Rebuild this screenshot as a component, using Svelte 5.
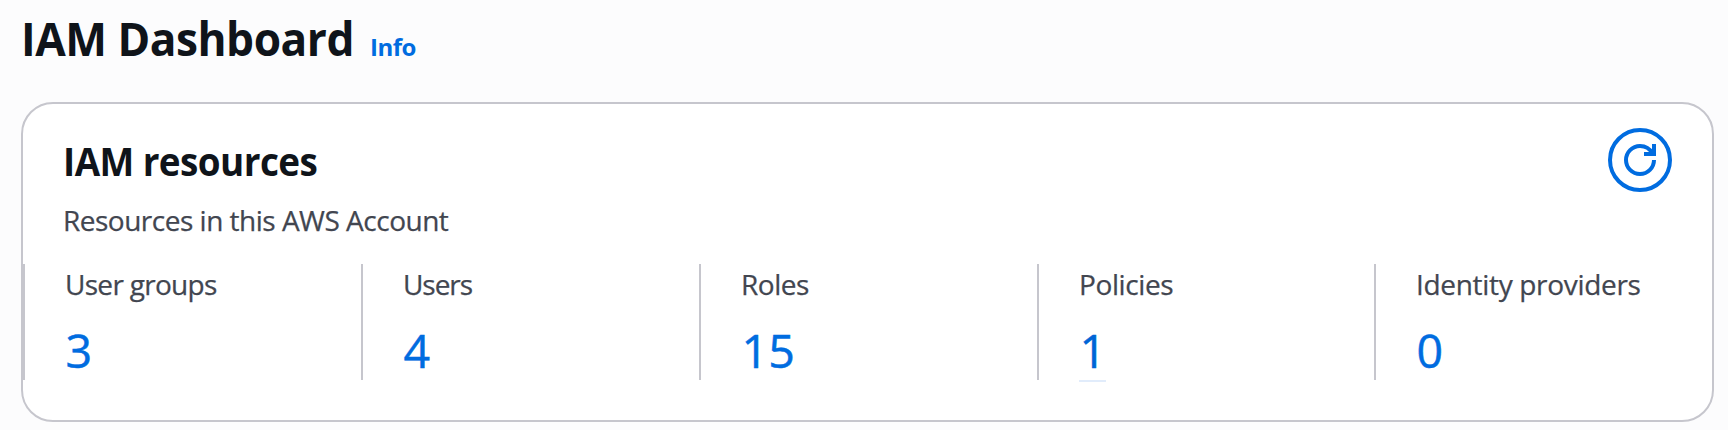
<script>
  const resources = [
    { label: 'User groups', value: 3, tracking: -0.7 },
    { label: 'Users', value: 4, tracking: -1.05 },
    { label: 'Roles', value: 15, tracking: -0.45 },
    { label: 'Policies', value: 1, tracking: -0.38, active: true },
    { label: 'Identity providers', value: 0, tracking: -0.32 }
  ];
</script>

<main>
  <header><h1>IAM Dashboard</h1><a class="info" href="#info">Info</a></header>
  <section>
    <div class="head">
      <div>
        <h2>IAM resources</h2>
        <p>Resources in this AWS Account</p>
      </div>
      <button aria-label="Refresh">
        <svg viewBox="0 0 32 32" width="32" height="32" fill="none" stroke="currentColor" stroke-width="4">
          <path d="M30 16A14 14 0 1 1 16 2C21.5 2 26 5 28.4 9.5" />
          <path d="M30 0v10H20" />
        </svg>
      </button>
    </div>
    <div class="grid">
      {#each resources as r}
        <div class="col">
          <div class="label" style="letter-spacing: {r.tracking}px">{r.label}</div>
          <a class="value" class:active={r.active} href="#list">{r.value}</a>
        </div>
      {/each}
    </div>
  </section>
</main>

<style>
  :global(body) { background: #fcfcfd; }
  main { box-sizing: border-box; height: 430px; padding: 0 14px 0 21px; font-family: "Open Sans", "Noto Sans", sans-serif; color: #0f141a; overflow: hidden; }
  header { height: 102px; box-sizing: border-box; padding-top: 8px; display: flex; align-items: baseline; }
  h1 { margin: 0 3px 0 0; font-size: 46px; line-height: 60px; letter-spacing: -0.5px; transform: scaleX(0.962); transform-origin: left; }
  a { color: #006ce0; text-decoration: none; }
  .info { font-size: 24px; line-height: 30px; font-weight: 700; letter-spacing: -0.5px; }
  section { box-sizing: border-box; height: 320px; border: 2px solid #c6c6cd; border-radius: 32px; background: #fff; }
  .head { display: flex; justify-content: space-between; height: 160px; padding: 24px 40px 0; box-sizing: border-box; }
  h2 { margin: 11px 0 0; font-size: 39px; line-height: 44px; letter-spacing: -0.6px; transform: scaleX(0.945); transform-origin: left; }
  p { margin: 17px 0 0; font-size: 28px; line-height: 40px; color: #424650; letter-spacing: -0.5px; -webkit-text-stroke: 0.25px currentColor; }
  button { box-sizing: border-box; width: 64px; height: 64px; padding: 0; border: 4px solid #006ce0; border-radius: 50%; background: #fff; color: #006ce0; display: grid; place-items: center; }
  svg { display: block; overflow: visible; }
  .grid { display: grid; grid-template-columns: repeat(3, 338px) 337px 1fr; height: 116px; }
  .col { box-sizing: border-box; height: 116px; border-left: 2px solid #c6c6cd; padding-left: 40px; }
  .label { font-size: 28px; line-height: 40px; color: #424650; white-space: nowrap; -webkit-text-stroke: 0.25px currentColor; }
  .value { display: block; width: fit-content; box-sizing: border-box; height: 62px; font-size: 46.5px; line-height: 60px; margin-top: 16px; text-indent: 0.6px; -webkit-text-stroke: 0.5px currentColor; }
  .active { border-bottom: 2px solid #e1ecfb; color: #0064d6; }
</style>
